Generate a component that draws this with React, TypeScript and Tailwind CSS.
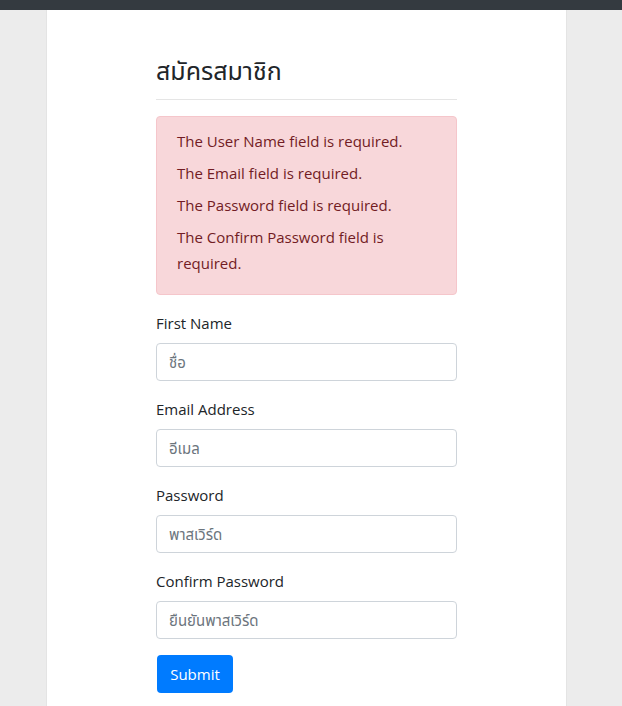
const errors = [
  'The User Name field is required.',
  'The Email field is required.',
  'The Password field is required.',
  'The Confirm Password field is required.',
];

const fields = [
  { label: 'First Name', placeholder: 'ชื่อ', type: 'text' },
  { label: 'Email Address', placeholder: 'อีเมล', type: 'email' },
  { label: 'Password', placeholder: 'พาสเวิร์ด', type: 'password' },
  { label: 'Confirm Password', placeholder: 'ยืนยันพาสเวิร์ด', type: 'password' },
];

export default function App() {
  return (
    <div
      className="min-h-[706px] bg-[#ececec] text-[#212529] text-[15px]"
      style={{ fontFamily: '"Open Sans", "Noto Sans Thai", "Noto Sans", "DejaVu Sans", sans-serif' }}
    >
      <div className="h-[10px] bg-[#343a40]" />
      <div className="ml-[46px] w-[521px] min-h-[696px] bg-white border-x border-[#e4e4e4]">
        <div className="ml-[109px] w-[301px] pt-[45px]">
          <h4 className="text-[25px] leading-[30px] font-normal mb-[14px]">สมัครสมาชิก</h4>
          <hr className="border-0 border-t border-[#e5e5e5] mb-[16px]" />
          <div className="bg-[#f8d7da] border border-[#f5c6cb] text-[#721c24] rounded px-5 pt-[11px] pb-[18px] mb-[16px]">
            <ul className="flex flex-col gap-[6px]">
              {errors.map((e) => (
                <li key={e} className="leading-[26px]">
                  {e}
                </li>
              ))}
            </ul>
          </div>
          <form className="flex flex-col gap-4" onSubmit={(e) => e.preventDefault()}>
            {fields.map((f) => (
              <div key={f.label}>
                <label className="block leading-[24px] mb-2">{f.label}</label>
                <input
                  type={f.type}
                  placeholder={f.placeholder}
                  className="block w-full h-[38px] px-3 border border-[#ced4da] rounded bg-white placeholder:text-[#6c757d] outline-none"
                />
              </div>
            ))}
            <div>
              <button
                type="submit"
                className="h-[38px] w-[76px] ml-px rounded bg-[#007bff] text-white leading-[24px]"
              >
                Submit
              </button>
            </div>
          </form>
        </div>
      </div>
    </div>
  );
}
